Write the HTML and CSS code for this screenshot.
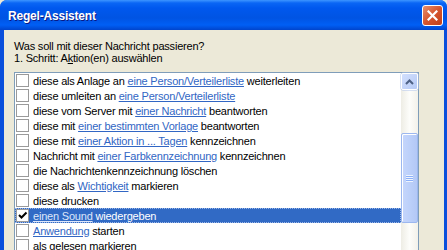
FILE: index.html
```html
<!DOCTYPE html>
<html>
<head>
    <title>Regel-Assistent</title>
    <link rel="stylesheet" href="styles.css">
</head>
<body>
    <div class="window">
        <div class="titlebar">
            <div class="title">Regel-Assistent</div>
            <button class="close-button">
                <svg width="11" height="11" viewBox="0 0 11 11"><path d="M1.5 1.5 L9.5 9.5 M9.5 1.5 L1.5 9.5" stroke="#fff" stroke-width="2.2" stroke-linecap="square"/></svg>
            </button>
        </div>
        <div class="client">
            <div class="prompt">Was soll mit dieser Nachricht passieren?</div>
            <div class="prompt">1. Schritt: A<u>k</u>tion(en) auswählen</div>
            <div class="listbox">
                <ul class="items">
                    <li class="item"><span class="check"></span>diese als Anlage an&nbsp;<a>eine Person/Verteilerliste</a>&nbsp;weiterleiten</li>
                    <li class="item"><span class="check"></span>diese umleiten an&nbsp;<a>eine Person/Verteilerliste</a></li>
                    <li class="item"><span class="check"></span>diese vom Server mit&nbsp;<a>einer Nachricht</a>&nbsp;beantworten</li>
                    <li class="item"><span class="check"></span>diese mit&nbsp;<a>einer bestimmten Vorlage</a>&nbsp;beantworten</li>
                    <li class="item"><span class="check"></span>diese mit&nbsp;<a>einer Aktion in ... Tagen</a>&nbsp;kennzeichnen</li>
                    <li class="item"><span class="check"></span>Nachricht mit&nbsp;<a>einer Farbkennzeichnung</a>&nbsp;kennzeichnen</li>
                    <li class="item"><span class="check"></span>die Nachrichtenkennzeichnung löschen</li>
                    <li class="item"><span class="check"></span>diese als&nbsp;<a>Wichtigkeit</a>&nbsp;markieren</li>
                    <li class="item"><span class="check"></span>diese drucken</li>
                    <li class="item selected"><span class="check checked"><svg width="11" height="11" viewBox="0 0 11 11"><path d="M2 5 L4.5 7.5 L9.5 2.5" stroke="#000" stroke-width="2" fill="none"/></svg></span><a>einen Sound</a>&nbsp;wiedergeben</li>
                    <li class="item"><span class="check"></span><a>Anwendung</a>&nbsp;starten</li>
                    <li class="item"><span class="check"></span>als gelesen markieren</li>
                </ul>
                <div class="scrollbar">
                    <div class="scroll-up">
                        <svg width="9" height="6" viewBox="0 0 9 6"><path d="M1 5 L4.5 1.5 L8 5" stroke="#4D6185" stroke-width="2" fill="none"/></svg>
                    </div>
                    <div class="thumb">
                        <div class="grip"></div>
                    </div>
                </div>
            </div>
        </div>
    </div>
</body>
</html>
```

FILE: styles.css
```css
* {
    box-sizing: border-box;
}
body {
    margin: 0;
    width: 447px;
    height: 250px;
    overflow: hidden;
    background: #ECE9D8;
    font-family: "Liberation Sans", Arial, sans-serif;
    font-size: 11px;
    letter-spacing: -0.2px;
    color: #000;
}
.window {
    height: 250px;
    display: flex;
    flex-direction: column;
    background: #0A4FDC;
    border-radius: 7px 7px 0 0;
    overflow: hidden;
}
.titlebar {
    height: 30px;
    flex: none;
    display: flex;
    justify-content: space-between;
    align-items: center;
    padding: 0 4px 0 8px;
    background: linear-gradient(to bottom, #3D95FF 0px, #0A66F5 3px, #0058EE 8px, #0054E3 18px, #005FF5 25px, #0044CC 30px);
}
.title {
    color: white;
    font-weight: bold;
    font-size: 12px;
    letter-spacing: -0.2px;
    text-shadow: 1px 1px #0A1883;
    padding-top: 2px;
}
.close-button {
    width: 21px;
    height: 21px;
    padding: 0;
    margin-top: 1px;
    border: 1px solid #fff;
    border-radius: 3px;
    background: linear-gradient(to bottom right, #E7906E, #D6552E 50%, #C0401A);
    display: flex;
    align-items: center;
    justify-content: center;
}
.client {
    flex: 1;
    margin: 0 3px 0 4px;
    padding: 10px 0 0 10px;
    background: #ECE9D8;
    display: flex;
    flex-direction: column;
}
.prompt {
    line-height: 12px;
    height: 12px;
}
.listbox {
    margin-top: 8px;
    width: 405px;
    flex: 1;
    display: flex;
    border: 1px solid #7F9DB9;
    border-bottom: none;
    background: white;
}
.items {
    flex: 1;
    list-style: none;
    margin: 0;
    padding: 0;
}
.item {
    height: 15px;
    display: flex;
    align-items: center;
    padding-left: 1px;
    white-space: nowrap;
}
.item a {
    color: #3166C4;
    text-decoration: underline;
}
.check {
    width: 13px;
    height: 13px;
    margin-right: 4px;
    border: 1px solid #9A9A9A;
    background: white;
    display: flex;
    align-items: center;
    justify-content: center;
}
.selected {
    background: #316AC5;
    color: white;
    outline: 1px dotted #9AB5E6;
    outline-offset: -1px;
}
.selected a {
    color: #DDE6FA;
}
.scrollbar {
    width: 17px;
    flex: none;
    background: linear-gradient(to right, #EEEDE5, #FDFDFA 50%, #F3F1EA);
}
.scroll-up {
    height: 17px;
    border: 1px solid #fff;
    border-radius: 2px;
    background: linear-gradient(to bottom right, #D2DFFD, #B6CAF6);
    box-shadow: 0 0 0 0.5px #B0C4EE;
    display: flex;
    align-items: center;
    justify-content: center;
}
.thumb {
    margin-top: 43px;
    height: 90px;
    border: 1px solid #9CB7EF;
    border-radius: 2px;
    background: linear-gradient(to right, #C6D6FC, #BCD0FA 50%, #B3C8F6);
    box-shadow: inset 1px 1px 0 #fff;
    display: flex;
    align-items: center;
    justify-content: center;
}
.grip {
    width: 7px;
    height: 7px;
    background: repeating-linear-gradient(to bottom, #EEF4FE 0, #EEF4FE 1px, #8CB0F8 1px, #8CB0F8 2px);
}
```
